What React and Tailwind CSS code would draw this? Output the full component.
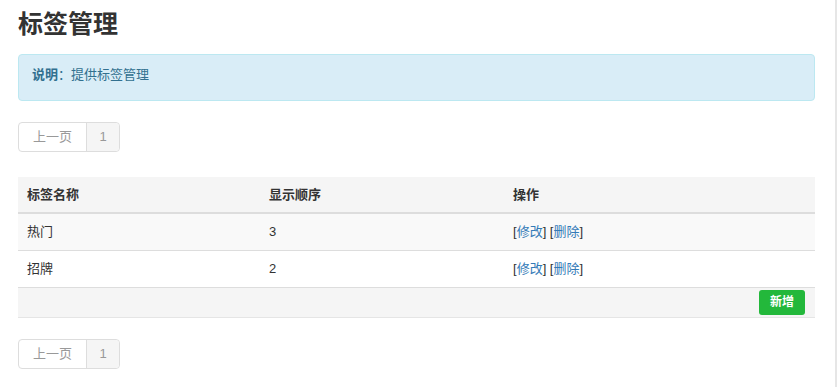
const FONT = { fontFamily: '"Liberation Sans", "Noto Sans CJK SC", sans-serif' };

const tags = [
  { name: "热门", order: 3 },
  { name: "招牌", order: 2 },
];

function Pager() {
  return (
    <div className="flex w-fit h-[30px] border border-[#dddddd] rounded text-[13px] text-[#999999]">
      <span className="flex items-center justify-center w-[68px] border-r border-[#dddddd]">上一页</span>
      <span className="flex items-center justify-center w-[32px] bg-[#f5f5f5] rounded-r">1</span>
    </div>
  );
}

export default function App() {
  return (
    <div className="w-[838px] h-[387px] bg-white overflow-hidden flex" style={FONT}>
      <div className="w-[835px] pl-[18px] pr-[20px] pt-[8px]">
        <h1 className="text-[25px] leading-[32px] font-bold text-[#333333]">标签管理</h1>

        <div className="mt-[14px] h-[47px] bg-[#d9edf7] border border-[#bce8f1] rounded px-[13px] pt-[10px] text-[13px] text-[#31708f]">
          <b>说明</b>：提供标签管理
        </div>

        <div className="mt-[21px]">
          <Pager />
        </div>

        <table className="mt-[25px] w-full text-[13px] text-[#333333] border-collapse">
          <thead>
            <tr className="bg-[#f5f5f5] h-[36px] border-b-2 border-[#dddddd]">
              <th className="w-[242px] text-left font-bold pl-[9px]">标签名称</th>
              <th className="w-[244px] text-left font-bold pl-[9px]">显示顺序</th>
              <th className="text-left font-bold pl-[9px]">操作</th>
            </tr>
          </thead>
          <tbody>
            {tags.map((t, i) => (
              <tr key={t.name} className={`h-[37px] border-b border-[#dddddd] ${i % 2 === 0 ? "bg-[#f9f9f9]" : "bg-white"}`}>
                <td className="pl-[9px]">{t.name}</td>
                <td className="pl-[9px]">{t.order}</td>
                <td className="pl-[9px]">
                  [<a className="text-[#337ab7]">修改</a>] [<a className="text-[#337ab7]">删除</a>]
                </td>
              </tr>
            ))}
            <tr className="h-[30px] bg-[#f5f5f5] border-b border-[#e5e5e5]">
              <td colSpan={3} className="text-right pr-[10px]">
                <button className="h-[25px] w-[46px] bg-[#23b83b] rounded-[3px] text-white text-[12px] font-bold align-middle">新增</button>
              </td>
            </tr>
          </tbody>
        </table>

        <div className="mt-[21px]">
          <Pager />
        </div>
      </div>
      <div className="w-[2px] bg-[#e6e6e6]" />
      <div className="flex-1 bg-white" />
    </div>
  );
}
